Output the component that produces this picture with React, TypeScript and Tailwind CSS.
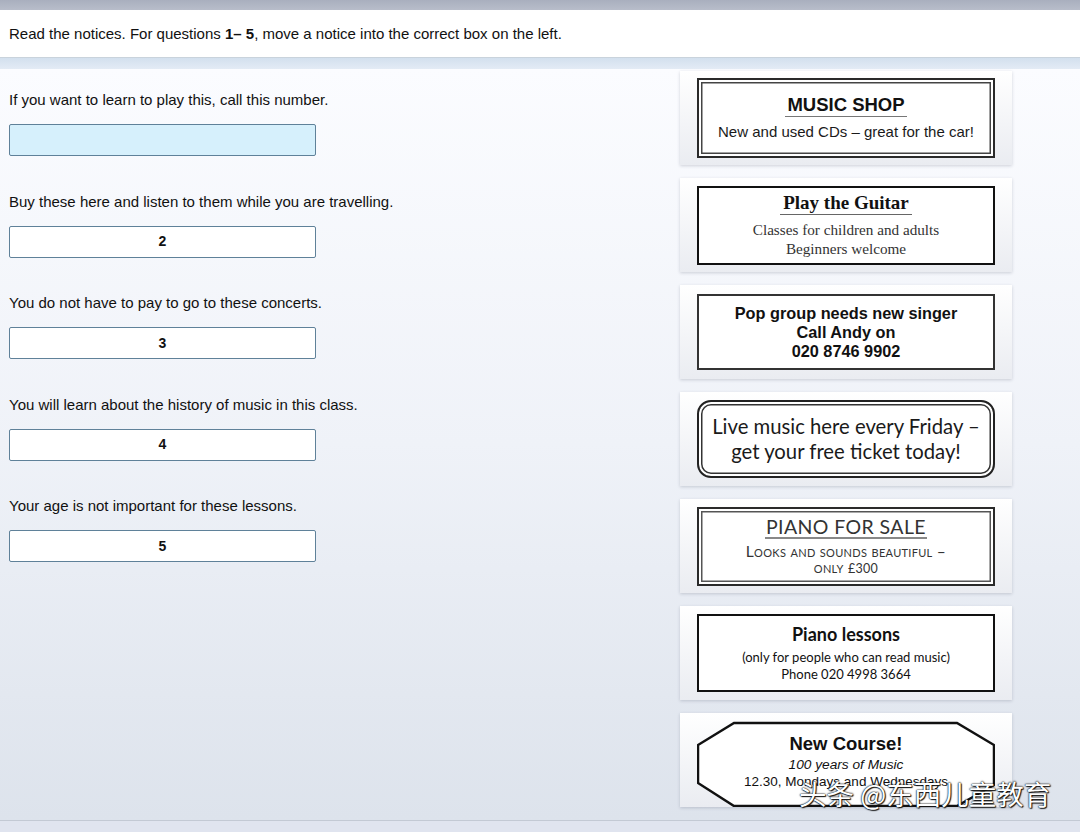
import type { ReactNode } from "react";

const questions = [
  { text: "If you want to learn to play this, call this number.", n: "", active: true },
  { text: "Buy these here and listen to them while you are travelling.", n: "2" },
  { text: "You do not have to pay to go to these concerts.", n: "3" },
  { text: "You will learn about the history of music in this class.", n: "4" },
  { text: "Your age is not important for these lessons.", n: "5" },
];

function Card({ children }: { children: ReactNode }) {
  return (
    <div className="h-[94px] px-[17px] flex items-center bg-linear-to-b from-white to-[#eaecf1] shadow-[0_1px_3px_rgba(60,70,90,0.22)]">
      {children}
    </div>
  );
}

function Octagon() {
  return (
    <svg className="absolute inset-0" width="298" height="86" viewBox="0 0 298 86">
      <polygon
        points="37,2 260,2 297,24 297,64 260,85 37,85 1,62 1,24"
        fill="#fff"
        stroke="#111"
        strokeWidth="2.5"
      />
    </svg>
  );
}

export default function App() {
  return (
    <div className="relative w-[1080px] h-[832px] overflow-hidden font-['Liberation_Sans',Arial,sans-serif] text-[#111]">
      <div className="h-[10px] bg-linear-to-b from-[#a9afbe] to-[#b8bdca]" />
      <div className="h-[48px] bg-white flex items-center px-[9px] pt-[1px] text-[15px] border-b border-[#c9d3dc]">
        <span>
          Read the notices. For questions <b>1– 5</b>, move a notice into the correct box on the left.
        </span>
      </div>
      <div className="h-[11px] bg-linear-to-b from-[#d3e0ee] to-[#e3ebf5]" />

      <div className="h-[751px] flex bg-linear-to-b from-[#fbfcff] via-[#eff2f8] to-[#dde3ec]">
        <div className="w-[680px] pl-[9px] pt-[22px] flex flex-col gap-[36.5px]">
          {questions.map((q, i) => (
            <div key={i} className="flex flex-col gap-[15px]">
              <div className="h-[18px] leading-[18px] text-[15px]">{q.text}</div>
              <div
                className={`w-[307px] h-[32px] rounded-[2px] border border-[#5f8199] flex items-center justify-center text-[14px] font-bold ${
                  q.active ? "bg-[#d6f0fc]" : "bg-white"
                }`}
              >
                {q.n}
              </div>
            </div>
          ))}
        </div>

        <div className="w-[332px] pt-[2px] flex flex-col gap-[13px]">
          <Card>
            <div className="w-full h-[80px] border-2 border-[#2a2a2a] shadow-[inset_0_0_0_2px_#fff,inset_0_0_0_3.5px_#444] bg-white flex flex-col items-center justify-center">
              <div className="text-[18.5px] font-bold leading-[20px] px-[2px] border-b border-[#777] pb-[1px]">MUSIC SHOP</div>
              <div className="text-[15px] leading-[18px] mt-[6px] text-[#1a1a1a]">New and used CDs – great for the car!</div>
            </div>
          </Card>

          <Card>
            <div className="w-full h-[79px] border-[2.5px] border-[#111] bg-white flex flex-col items-center justify-center font-['Liberation_Serif','Times_New_Roman',serif]">
              <div className="text-[19px] font-bold leading-[21px] px-[3px] border-b border-[#666] pb-[1px]">Play the Guitar</div>
              <div className="text-[15.2px] leading-[19px] mt-[5px] text-[#333] text-center">
                Classes for children and adults
                <br />
                Beginners welcome
              </div>
            </div>
          </Card>

          <Card>
            <div className="w-full h-[76px] border-2 border-[#333] bg-white flex flex-col items-center justify-center text-[16.3px] font-bold leading-[19px] text-center">
              <div>Pop group needs new singer</div>
              <div>Call Andy on</div>
              <div>020 8746 9902</div>
            </div>
          </Card>

          <Card>
            <div className="w-full h-[78px] border-2 border-[#222] rounded-[14px] shadow-[inset_0_0_0_2px_#fff,inset_0_0_0_3.5px_#333] bg-white flex flex-col items-center justify-center font-['Lato',sans-serif] text-[20.3px] leading-[25px] text-center text-[#1a1a1a]">
              <div>Live music here every Friday –</div>
              <div>get your free ticket today!</div>
            </div>
          </Card>

          <Card>
            <div className="w-full h-[79px] border-2 border-[#2a2a2a] shadow-[inset_0_0_0_2px_#fff,inset_0_0_0_3.5px_#555] bg-white flex flex-col items-center justify-center font-['Lato',sans-serif] text-[#333]">
              <div className="text-[19.5px] leading-[21px] tracking-[0.4px] px-[1px] border-b-2 border-[#888]">PIANO FOR SALE</div>
              <div className="text-[15.5px] leading-[16px] mt-[4px] [font-variant:small-caps] text-center tracking-[0.3px]">
                Looks and sounds beautiful –
                <br />
                only <span className="text-[12.5px]">£300</span>
              </div>
            </div>
          </Card>

          <Card>
            <div className="w-full h-[78px] border-[2.5px] border-[#111] bg-white flex flex-col items-center justify-center font-['Lato',sans-serif] text-center">
              <div className="text-[18px] font-bold leading-[20px]">Piano lessons</div>
              <div className="text-[13px] leading-[17px] mt-[5px]">
                (only for people who can read music)
                <br />
                Phone 020 4998 3664
              </div>
            </div>
          </Card>

          <div className="h-[94px] px-[17px] pt-[8px] overflow-hidden bg-linear-to-b from-white to-[#eaecf1] shadow-[0_1px_3px_rgba(60,70,90,0.22)]">
            <div className="relative w-full h-[86px]">
              <Octagon />
              <div className="relative flex flex-col items-center pt-[12px] text-center">
                <div className="text-[18.5px] font-bold leading-[21px]">New Course!</div>
                <div className="text-[13.7px] italic leading-[17px] mt-[2px]">100 years of Music</div>
                <div className="text-[13.5px] leading-[17px]">12.30, Mondays and Wednesdays</div>
              </div>
            </div>
          </div>
        </div>
      </div>

      <div className="h-[12px] border-t border-[#c3c9d4] bg-[#e0e4ef]" />

      <div className="absolute left-[799px] top-[776px] text-[27.5px] leading-[34px] text-white font-['Noto_Sans_CJK_SC',sans-serif] [text-shadow:0_0_1px_#000,0_0_2px_#000,1px_1px_1px_#222]">
        头条 @东西儿童教育
      </div>
    </div>
  );
}
